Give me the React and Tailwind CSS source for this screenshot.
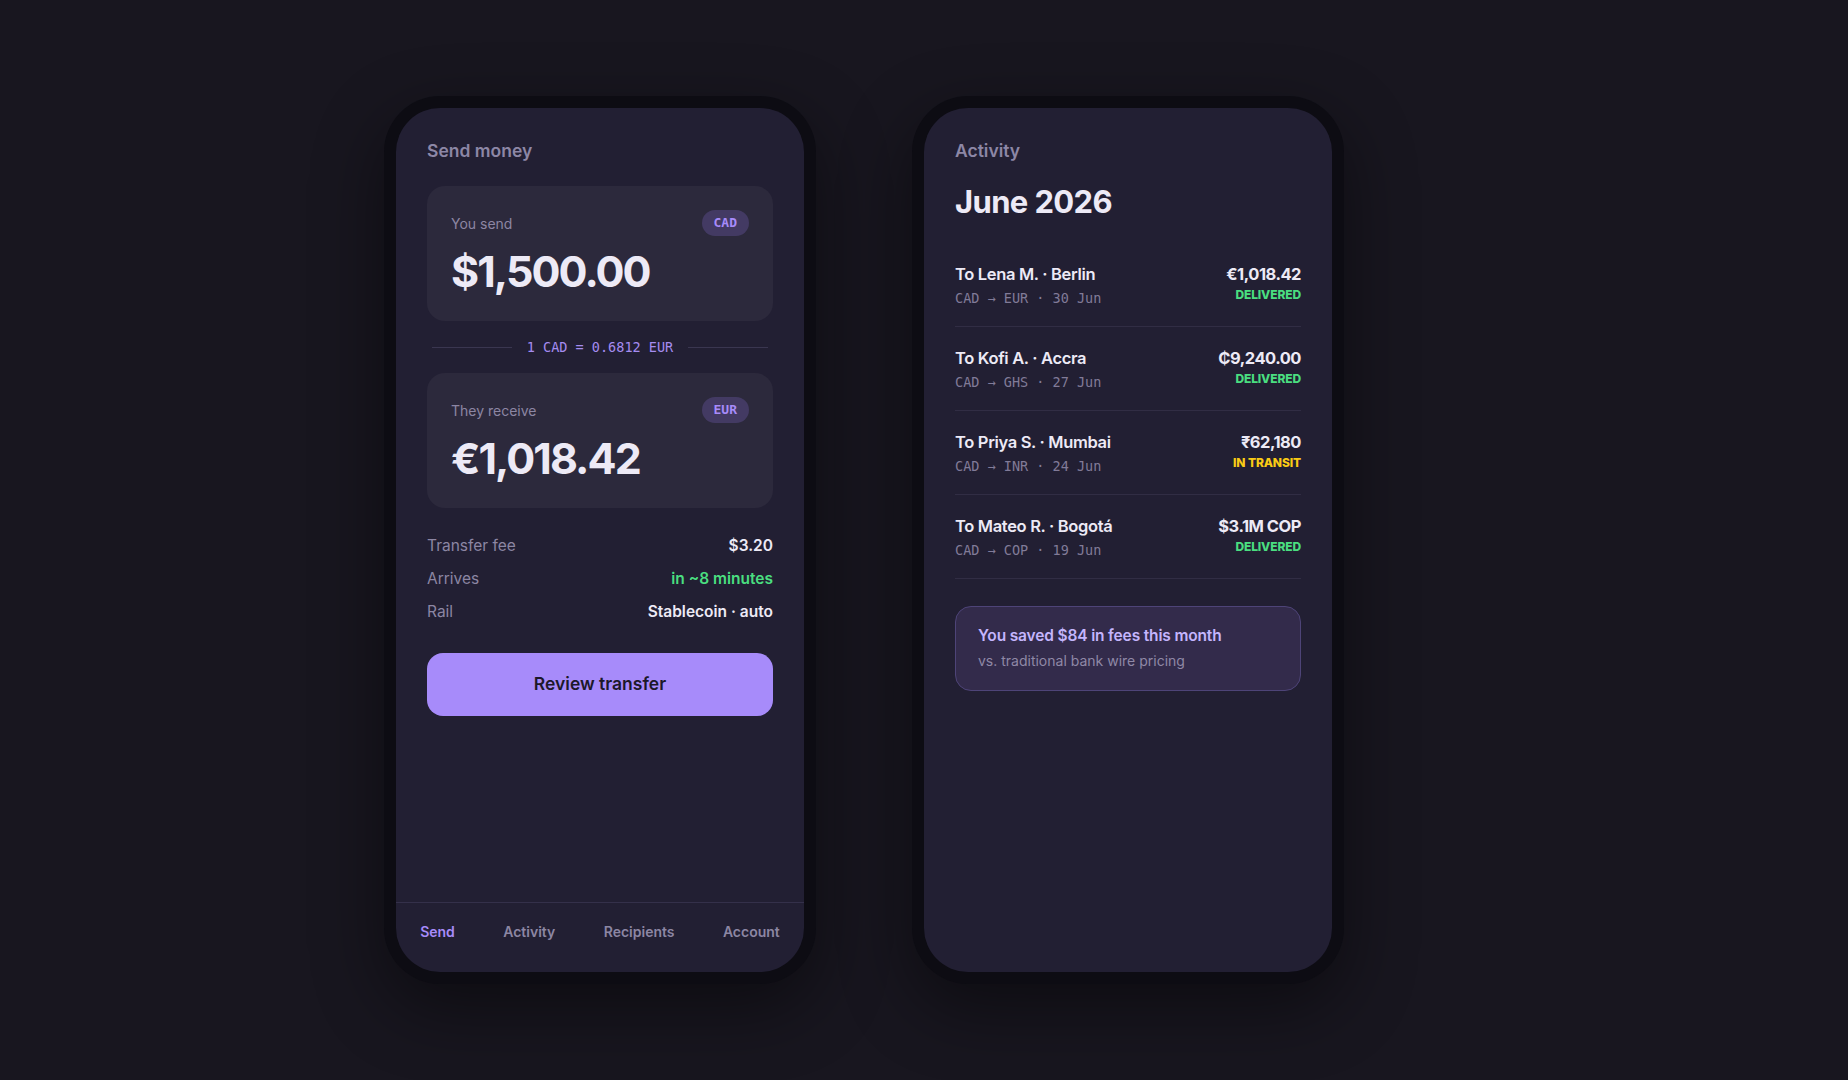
import React from 'react';

const mono = "font-['DejaVu_Sans_Mono',monospace]";

const Phone = ({ children }) => (
  <div className="w-[432px] h-[888px] shrink-0 rounded-[56px] bg-[#0d0c13] p-3 shadow-[0_24px_70px_rgba(0,0,0,0.45)]">
    <div className="h-full rounded-[44px] bg-[#221f33] flex flex-col overflow-hidden">
      {children}
    </div>
  </div>
);

const AmountCard = ({ label, code, amount }) => (
  <div className="rounded-[18px] bg-[#2c293c] px-6 pt-6 pb-[27px]">
    <div className="flex items-center justify-between h-[26px]">
      <span className="text-[14px] text-[#8c86a3]">{label}</span>
      <span className={`${mono} h-[26px] px-[12px] rounded-full bg-[#433a63] text-[#a78bfa] text-[13px] font-bold flex items-center`}>
        {code}
      </span>
    </div>
    <div className="mt-[12px] text-[43px] leading-[46px] font-bold tracking-[-0.045em] text-[#edeaf6]">
      {amount}
    </div>
  </div>
);

const DetailRow = ({ label, value, valueClass }) => (
  <div className="flex items-center justify-between h-[22px]">
    <span className="text-[15.5px] text-[#8c86a3]">{label}</span>
    <span className={`text-[15.5px] font-semibold ${valueClass}`}>{value}</span>
  </div>
);

const transfers = [
  { name: 'To Lena M. · Berlin', sub: 'CAD → EUR · 30 Jun', amount: '€1,018.42', status: 'DELIVERED' },
  { name: 'To Kofi A. · Accra', sub: 'CAD → GHS · 27 Jun', amount: '₵9,240.00', status: 'DELIVERED' },
  { name: 'To Priya S. · Mumbai', sub: 'CAD → INR · 24 Jun', amount: '₹62,180', status: 'IN TRANSIT' },
  { name: 'To Mateo R. · Bogotá', sub: 'CAD → COP · 19 Jun', amount: '$3.1M COP', status: 'DELIVERED' },
];

const SendScreen = () => (
  <>
    <div className="flex-1 px-[31px] pt-[31px]">
      <div className="text-[17.5px] leading-[24px] font-semibold text-[#8d87a6]">Send money</div>

      <div className="mt-[23px]">
        <AmountCard label="You send" code="CAD" amount="$1,500.00" />
      </div>

      <div className="flex items-center gap-[15px] px-[5px] h-[52px]">
        <div className="flex-1 h-px bg-[#3a3650]" />
        <span className={`${mono} text-[13.5px] text-[#a58cf0]`}>1 CAD = 0.6812 EUR</span>
        <div className="flex-1 h-px bg-[#3a3650]" />
      </div>

      <AmountCard label="They receive" code="EUR" amount="€1,018.42" />

      <div className="mt-[27px] flex flex-col gap-[11px]">
        <DetailRow label="Transfer fee" value="$3.20" valueClass="text-[#edeaf6]" />
        <DetailRow label="Arrives" value="in ~8 minutes" valueClass="text-[#4ade80]" />
        <DetailRow label="Rail" value="Stablecoin · auto" valueClass="text-[#edeaf6]" />
      </div>

      <button className="mt-[30px] w-full h-[63px] rounded-[16px] bg-[#a78bfa] text-[#1c1829] text-[17.5px] font-semibold">
        Review transfer
      </button>
    </div>

    <div className="h-[70px] border-t border-[#34304a] flex justify-around pt-[19px] text-[14px] leading-[20px] font-semibold">
      <span className="text-[#a78bfa]">Send</span>
      <span className="text-[#8c86a3]">Activity</span>
      <span className="text-[#8c86a3]">Recipients</span>
      <span className="text-[#8c86a3]">Account</span>
    </div>
  </>
);

const ActivityScreen = () => (
  <div className="flex-1 px-[31px] pt-[31px]">
    <div className="text-[17.5px] leading-[24px] font-semibold text-[#8d87a6]">Activity</div>
    <div className="mt-[19px] text-[31px] leading-[40px] font-bold tracking-[-0.02em] text-[#edeaf6]">June 2026</div>

    <div className="mt-[21px]">
      {transfers.map((t) => (
        <div key={t.name} className="flex justify-between pt-[20px] pb-[19px] border-b border-[#312d44]">
          <div>
            <div className="text-[16.5px] leading-[22px] font-semibold tracking-[-0.02em] text-[#edeaf6]">{t.name}</div>
            <div className={`${mono} mt-[4px] text-[13.5px] leading-[18px] text-[#817b98]`}>{t.sub}</div>
          </div>
          <div className="flex flex-col items-end">
            <div className="text-[16.5px] leading-[22px] font-bold tracking-[-0.03em] text-[#edeaf6]">{t.amount}</div>
            <div
              className={`mt-[2px] text-[12px] leading-[16px] font-extrabold tracking-[-0.01em] ${
                t.status === 'DELIVERED' ? 'text-[#4ade80]' : 'text-[#facc15]'
              }`}
            >
              {t.status}
            </div>
          </div>
        </div>
      ))}
    </div>

    <div className="mt-[27px] rounded-[16px] border border-[#4e4478] bg-[#332b4b] px-[22px] pt-[18px] pb-[19px]">
      <div className="text-[15.5px] leading-[22px] font-semibold tracking-[-0.01em] text-[#c4b5fd]">
        You saved $84 in fees this month
      </div>
      <div className="mt-[4px] text-[14px] leading-[20px] text-[#8f88a6]">vs. traditional bank wire pricing</div>
    </div>
  </div>
);

export default function App() {
  return (
    <div className="min-h-screen bg-[#18161f] flex items-center pl-[384px] gap-[96px] font-['Inter',sans-serif]">
      <Phone>
        <SendScreen />
      </Phone>
      <Phone>
        <ActivityScreen />
      </Phone>
    </div>
  );
}
